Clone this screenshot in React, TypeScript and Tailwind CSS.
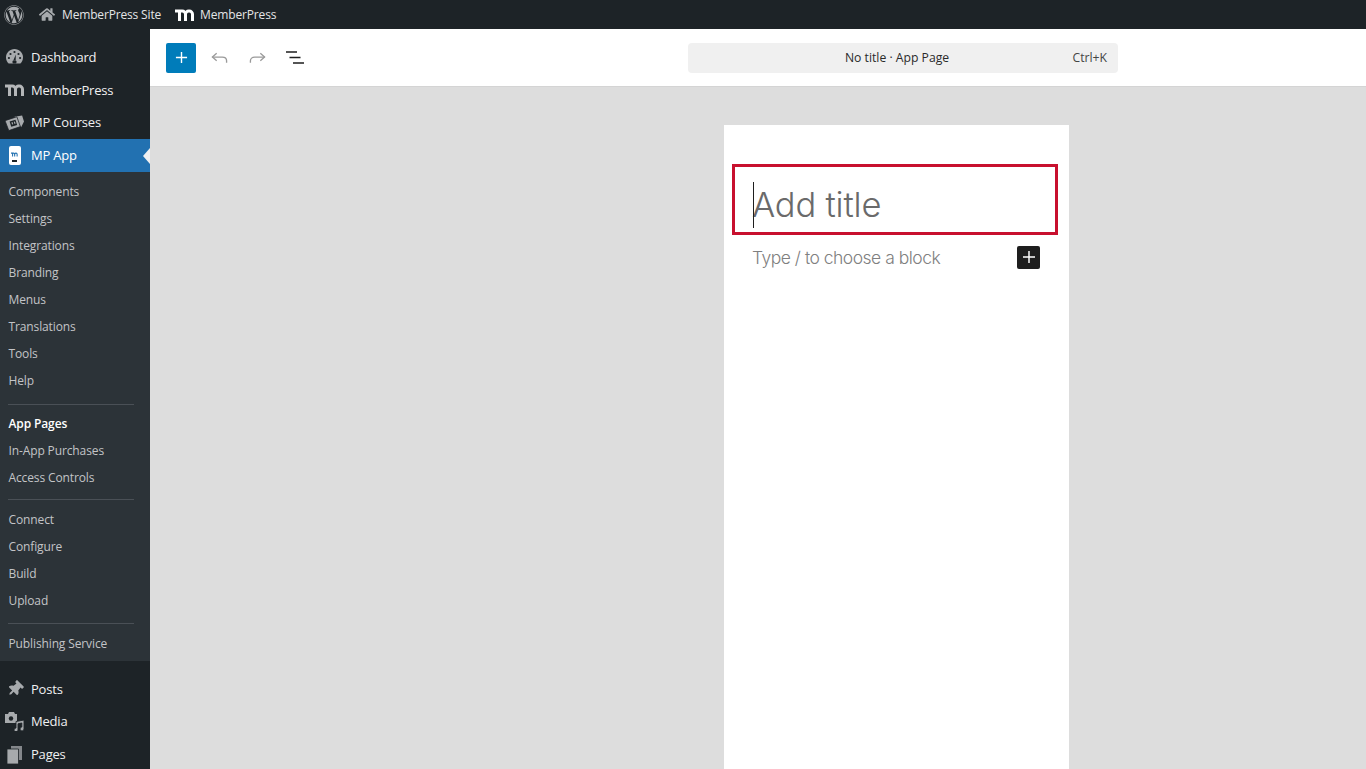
import React from "react";
import { FaWordpress, FaHome, FaThumbtack } from "react-icons/fa";

const sans = "font-['Open_Sans','Noto_Sans',sans-serif]";

function MLogo({ className }: { className?: string }) {
  return (
    <svg viewBox="0 0 20 12" className={className} fill="none" stroke="currentColor" strokeWidth="3">
      <path d="M0 2h7.300a3.200 3.200 0 0 1 3.200 3.200V12" />
      <path d="M4.500 12V2" />
      <path d="M10.500 5.200A3.200 3.200 0 0 1 13.700 2h.600a3.200 3.200 0 0 1 3.200 3.200V12" />
    </svg>
  );
}

function GaugeIcon() {
  return (
    <svg viewBox="0 0 17 15" className="w-[17px] h-[15px] text-[#a7aaad]" fill="currentColor">
      <path d="M8.500 0C3.800 0 0 3.700 0 8.300c0 2.600 1 4.900 2.600 6.200h11.800c1.600-1.300 2.600-3.600 2.600-6.200C17 3.700 13.200 0 8.500 0z" />
      <circle cx="8.500" cy="3" r="1.100" fill="#1d2327" />
      <circle cx="4.500" cy="5" r="1.100" fill="#1d2327" />
      <circle cx="12.500" cy="5" r="1.100" fill="#1d2327" />
      <circle cx="2.900" cy="9" r="1.100" fill="#1d2327" />
      <circle cx="14.100" cy="9" r="1.100" fill="#1d2327" />
      <path d="M9.800 5.500 9.700 11.500H7.300z" fill="#1d2327" />
      <rect x="6.500" y="11.500" width="4" height="3" rx="1" fill="#1d2327" />
    </svg>
  );
}

function CoursesIcon() {
  return (
    <svg viewBox="0 0 20 16" className="w-[19px] h-[16px] text-[#a7aaad]" fill="currentColor">
      <path d="M10 1.500 18 0l2 6.500-3 6z" />
      <path d="M0 5.500 12.500 1.500l3.700 10.300L4 16z" stroke="#1d2327" strokeWidth="0.8" />
      <path d="M4.800 6.500 11 4.600l1.800 5.400-6.200 2z" fill="#1d2327" />
      <path d="M6.700 7.400l1.200-.4.800 2.300-1.200.4zM9.200 6.700l1.200-.4.800 2.300-1.200.4z" />
    </svg>
  );
}

function PhoneIcon() {
  return (
    <div className="w-[12px] h-[19px] rounded-[2px] bg-white flex flex-col items-center pt-[6px]">
      <MLogo className="w-[7px] h-[5px] text-[#2271b1]" />
      <div className="mt-[3px] w-[5px] h-[2px] bg-[#1d2327]" />
    </div>
  );
}

function MediaIcon() {
  return (
    <svg viewBox="0 0 19 19" className="w-[19px] h-[19px] text-[#a7aaad]" fill="currentColor">
      <path d="M0 2h3l1-2h5l1 2h2v9H0z" />
      <circle cx="6" cy="6.500" r="2.200" fill="#1d2327" />
      <path d="M11 9.500l8-1.500v9a2 2 0 1 1-2.200-2v-4l-3.800.8V18a2 2 0 1 1-2-2z" stroke="#1d2327" strokeWidth="0.9" />
    </svg>
  );
}

function PagesIcon() {
  return (
    <svg viewBox="0 0 15 18" className="w-[15px] h-[18px] text-[#a7aaad]" fill="currentColor">
      <path d="M4 0h11v14H4z" opacity="0.75" />
      <path d="M0 3h11.500v15H0z" stroke="#1d2327" strokeWidth="0.8" />
    </svg>
  );
}

function Top({ icon, label, active, low }: { icon: React.ReactNode; label: string; active?: boolean; low?: boolean }) {
  return (
    <div className={`relative h-[33px] flex items-center shrink-0 ${active ? "bg-[#2271b1] text-white" : "text-[#f0f0f1]"}`}>
      <div className="w-[31px] flex justify-center pr-[2px] shrink-0">{icon}</div>
      <span className={`text-[13px] tracking-[-0.2px] ${low ? "pt-[2px]" : ""}`}>{label}</span>
      {active && (
        <div className="absolute right-0 top-[9px] w-0 h-0 border-y-[8px] border-y-transparent border-r-[7px] border-r-[#f0f0f1]" />
      )}
    </div>
  );
}

function Sub({ label, bold }: { label: string; bold?: boolean }) {
  return (
    <div className={`h-[27px] flex items-center pl-[8.500px] text-[12px] tracking-[-0.12px] ${bold ? "text-white font-semibold" : "text-[#c3c4c7]"}`}>
      <span className="pt-px">{label}</span>
    </div>
  );
}

function Sep({ className }: { className: string }) {
  return <div className={`h-px bg-[#4a5056] ml-[8px] mr-[16px] ${className}`} />;
}

export default function App() {
  return (
    <div className={`w-[1366px] h-[769px] overflow-hidden flex flex-col bg-[#dddddd] ${sans}`}>
      <header className="h-[29px] shrink-0 bg-[#1d2327] flex items-center text-[#e4e5e6] text-[12px] tracking-[-0.16px]">
        <FaWordpress className="w-[20px] h-[20px] ml-[4px] text-[#a7aaad]" />
        <FaHome className="w-[16px] h-[15px] ml-[15px] text-[#a7aaad]" />
        <span className="ml-[7px] pt-px">MemberPress Site</span>
        <MLogo className="w-[20px] h-[12px] ml-[14px] text-white" />
        <span className="ml-[5px] pt-px">MemberPress</span>
      </header>
      <div className="flex flex-1 min-h-0">
        <aside className="w-[150px] shrink-0 bg-[#1d2327] pt-[11px] flex flex-col overflow-hidden">
          <Top low icon={<GaugeIcon />} label="Dashboard" />
          <Top low icon={<MLogo className="w-[20px] h-[12px] text-[#b4b6b8]" />} label="MemberPress" />
          <Top icon={<CoursesIcon />} label="MP Courses" />
          <Top active icon={<PhoneIcon />} label="MP App" />
          <div className="bg-[#2c3338] pt-[6px] pb-[4px] shrink-0">
            <Sub label="Components" />
            <Sub label="Settings" />
            <Sub label="Integrations" />
            <Sub label="Branding" />
            <Sub label="Menus" />
            <Sub label="Translations" />
            <Sub label="Tools" />
            <Sub label="Help" />
            <Sep className="mt-[10px] mb-[5px]" />
            <Sub label="App Pages" bold />
            <Sub label="In-App Purchases" />
            <Sub label="Access Controls" />
            <Sep className="mt-[8px] mb-[6px]" />
            <Sub label="Connect" />
            <Sub label="Configure" />
            <Sub label="Build" />
            <Sub label="Upload" />
            <Sep className="mt-[9px] mb-[6px]" />
            <Sub label="Publishing Service" />
          </div>
          <div className="h-[11px] shrink-0" />
          <Top low icon={<FaThumbtack className="w-[16px] h-[16px] rotate-45 text-[#a7aaad]" />} label="Posts" />
          <Top icon={<MediaIcon />} label="Media" />
          <Top icon={<PagesIcon />} label="Pages" />
        </aside>
        <main className="flex-1 min-w-0 flex flex-col">
          <div className="h-[58px] shrink-0 bg-white border-b border-[#d4d4d4] flex items-center relative">
            <button className="ml-[16px] w-[30px] h-[30px] rounded-[2px] bg-[#007cba] flex items-center justify-center">
              <svg viewBox="0 0 14 14" className="w-[13px] h-[13px]" stroke="white" strokeWidth="1.5"><path d="M7 1v12M1 7h12" /></svg>
            </button>
            <svg viewBox="0 0 18 12" className="ml-[15px] w-[17px] h-[12px]" fill="none" stroke="#9a9a9a" strokeWidth="1.4">
              <path d="M6 1 1.500 5 6 9" />
              <path d="M1.500 5H12c2.600 0 4.500 1.700 4.500 4v2" />
            </svg>
            <svg viewBox="0 0 18 12" className="ml-[21px] w-[17px] h-[12px]" fill="none" stroke="#9a9a9a" strokeWidth="1.4">
              <path d="M12 1l4.500 4L12 9" />
              <path d="M16.500 5H6C3.400 5 1.500 6.700 1.500 9v2" />
            </svg>
            <svg viewBox="0 0 18 13" className="ml-[20px] w-[18px] h-[13px]" stroke="#1e1e1e" strokeWidth="1.5">
              <path d="M0 1h11M3.500 6.500h11M7 12h11" />
            </svg>
            <div className="absolute left-[538px] top-[14px] w-[430px] h-[30px] rounded-[4px] bg-[#f0f0f0] flex items-center text-[12.200px] text-[#2a2a2a]">
              <span className="absolute left-0 right-[12px] text-center">No title · App Page</span>
              <span className="absolute right-[11px] text-[#444]">Ctrl+K</span>
            </div>
          </div>
          <div className="flex-1 min-h-0 pt-[38px] pl-[574px]">
            <div className="w-[345px] h-[700px] bg-white pt-[39px] px-[8px] font-['Inter',sans-serif]">
              <div className="relative w-[326px] h-[71px] border-[3px] border-[#c8102e] flex items-center pl-[17px]">
                <div className="absolute left-[18px] top-[15px] h-[46px] w-px bg-[#1e1e1e]" />
                <span className="pt-[12px] text-[34.500px] font-light text-[#6a6a6a] tracking-[-0.2px] leading-none">Add title</span>
              </div>
              <div className="flex items-center h-[24px] mt-[10px] pl-[20px] pr-px w-[309px] justify-between">
                <span className="pt-[2px] text-[17.500px] font-light text-[#808080] tracking-[-0.5px]">Type / to choose a block</span>
                <div className="w-[23px] h-[23px] rounded-[2px] bg-[#1e1e1e] flex items-center justify-center">
                  <svg viewBox="0 0 14 14" className="w-[12px] h-[12px]" stroke="white" strokeWidth="1.7"><path d="M7 0v14M0 7h14" /></svg>
                </div>
              </div>
            </div>
          </div>
        </main>
      </div>
    </div>
  );
}
